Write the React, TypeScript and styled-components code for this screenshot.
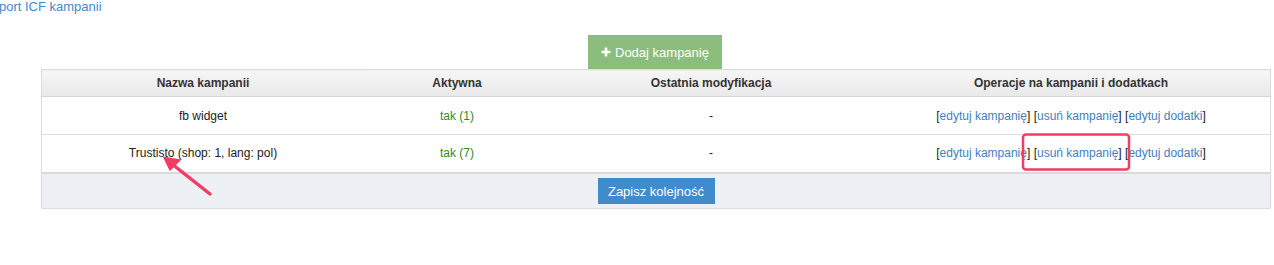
import React from "react";
import styled, { createGlobalStyle } from "styled-components";

const GlobalStyle = createGlobalStyle`
  html, body {
    margin: 0;
    padding: 0;
    background: #ffffff;
    font-family: "Liberation Sans", Arial, sans-serif;
    font-size: 12px;
    color: #333;
  }
`;

const Page = styled.div`
  position: relative;
  width: 1274px;
  height: 265px;
  overflow: hidden;
`;

const TopLink = styled.a`
  display: block;
  height: 14px;
  margin: 0 0 0 -1px;
  line-height: 14px;
  font-size: 13px;
  color: #428bca;
  text-decoration: none;
`;

const Toolbar = styled.div`
  display: flex;
  justify-content: center;
  padding-top: 21px;
  margin-left: 41px;
  width: 1228px;
`;

const AddButton = styled.button`
  display: flex;
  align-items: center;
  gap: 4px;
  height: 34px;
  width: 134px;
  padding: 0 0 0 13px;
  border: none;
  border-radius: 0;
  background: #8bbd7d;
  color: #ffffff;
  font-family: "Liberation Sans", Arial, sans-serif;
  font-size: 13px;
  cursor: pointer;
`;

const Table = styled.table`
  margin-left: 41px;
  width: 1228px;
  border-collapse: collapse;
  border: 1px solid #dcdcdc;
  table-layout: fixed;
`;

const HeadCell = styled.th<{ $w: number }>`
  width: ${({ $w }) => $w}px;
  height: 26px;
  padding: 0;
  font-size: 12px;
  font-weight: bold;
  color: #333;
  text-align: center;
  background: linear-gradient(#f6f6f6, #e9e9e9);
  border-bottom: 1px solid #d6d6d6;
`;

const Row = styled.tr<{ $last?: boolean }>`
  height: 38px;
  border-bottom: ${({ $last }) => ($last ? "2px solid #dadada" : "1px solid #dedede")};
`;

const Cell = styled.td`
  padding: 0;
  text-align: center;
  font-size: 12px;
  color: #222;
  background: #fff;
`;

const Active = styled.span`
  color: #2f8a1f;
`;

const Bracket = styled.span`
  color: #222;
`;

const OpLink = styled.a`
  color: #3f7fc0;
  text-decoration: none;
`;

const FooterCell = styled.td`
  height: 34px;
  padding: 0;
  text-align: center;
  background: #edf1f6;
`;

const SaveButton = styled.button`
  height: 26px;
  width: 117px;
  padding: 0;
  margin-top: 1px;
  border: none;
  border-radius: 0;
  background: #428bca;
  color: #ffffff;
  font-family: "Liberation Sans", Arial, sans-serif;
  font-size: 13px;
  cursor: pointer;
`;

const Overlay = styled.svg`
  position: absolute;
  left: 0;
  top: 0;
  pointer-events: none;
`;

const columns = [
  { title: "Nazwa kampanii", w: 322 },
  { title: "Aktywna", w: 186 },
  { title: "Ostatnia modyfikacja", w: 322 },
  { title: "Operacje na kampanii i dodatkach", w: 398 },
];

const campaigns = [
  { name: "fb widget", active: "tak (1)", modified: "-" },
  { name: "Trustisto (shop: 1, lang: pol)", active: "tak (7)", modified: "-" },
];

const Operation = ({ label }: { label: string }) => (
  <>
    <Bracket>[</Bracket>
    <OpLink href="#">{label}</OpLink>
    <Bracket>]</Bracket>
  </>
);

const App: React.FC = () => {
  return (
    <Page>
      <GlobalStyle />
      <TopLink href="#">port ICF kampanii</TopLink>
      <Toolbar>
        <AddButton>
          <svg width="10" height="10" viewBox="0 0 10 10">
            <path d="M5 0.5v9M0.5 5h9" stroke="#fff" strokeWidth="2.6" />
          </svg>
          Dodaj kampanię
        </AddButton>
      </Toolbar>
      <Table>
        <thead>
          <tr>
            {columns.map((c) => (
              <HeadCell key={c.title} $w={c.w}>
                {c.title}
              </HeadCell>
            ))}
          </tr>
        </thead>
        <tbody>
          {campaigns.map((c, i) => (
            <Row key={c.name} $last={i === campaigns.length - 1}>
              <Cell>{c.name}</Cell>
              <Cell>
                <Active>{c.active}</Active>
              </Cell>
              <Cell>{c.modified}</Cell>
              <Cell>
                <Operation label="edytuj kampanię" />{" "}
                <Operation label="usuń kampanię" />{" "}
                <Operation label="edytuj dodatki" />
              </Cell>
            </Row>
          ))}
          <tr>
            <FooterCell colSpan={4}>
              <SaveButton>Zapisz kolejność</SaveButton>
            </FooterCell>
          </tr>
        </tbody>
      </Table>
      <Overlay width="1274" height="265" viewBox="0 0 1274 265">
        <rect x="1023" y="134.5" width="106" height="35" rx="3" fill="none" stroke="#f23d63" strokeWidth="2.5" />
        <line x1="210" y1="194" x2="172" y2="164" stroke="#f23d63" strokeWidth="3.5" strokeLinecap="round" />
        <path d="M164 157.5 L180 160 L170 170 Z" fill="#f23d63" stroke="#f23d63" strokeWidth="1.5" strokeLinejoin="round" />
      </Overlay>
    </Page>
  );
};

export default App;
